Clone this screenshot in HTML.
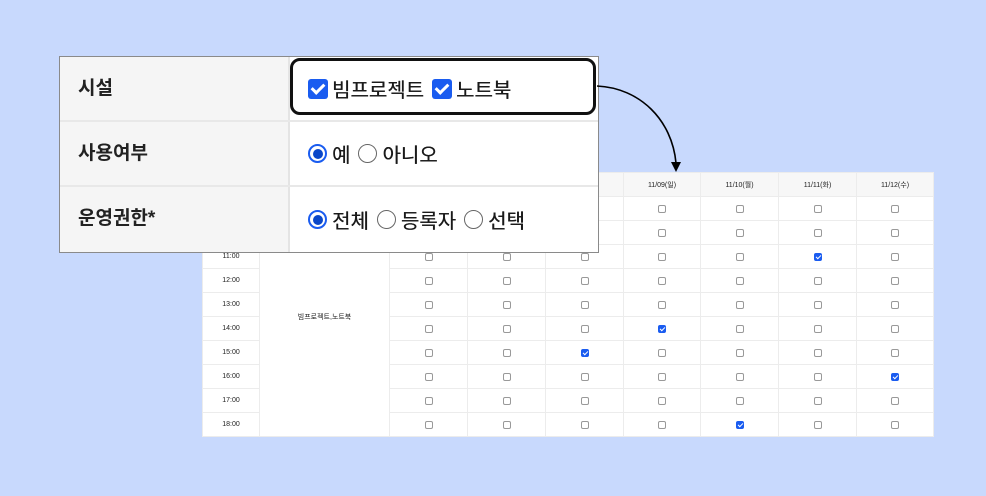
<!DOCTYPE html>
<html><head><meta charset="utf-8">
<style>
*{margin:0;padding:0;box-sizing:border-box}
body{width:986px;height:496px;background:#c8d9fd;position:relative;overflow:hidden;font-family:"Liberation Sans","Noto Sans CJK KR",sans-serif}
#tbl{position:absolute;left:202px;top:172px;width:731px;height:263px;background:#fff;border-collapse:collapse;table-layout:fixed}
#tbl td{border:1px solid #ececec;height:24px;text-align:center;font-size:7px;color:#222;padding:0}
#tbl tr.h td{background:#f7f7f7;font-size:7px;height:24px}
.cb{display:inline-block;width:8px;height:8px;border:1px solid #999;border-radius:2px;vertical-align:middle}
.cb.on{background:#1a5cf0;border-color:#1a5cf0;position:relative}
.cb.on:after{content:"";position:absolute;left:2px;top:0px;width:2px;height:4px;border:solid #fff;border-width:0 1px 1px 0;transform:rotate(45deg)}
#ov{position:absolute;left:59px;top:56px;width:540px;height:197px;background:#fff;border:1px solid #8a8a8a}
.row{position:absolute;left:0;width:538px;height:65px;border-bottom:2px solid #e8e8e8}
.lab{position:absolute;left:0;top:0;width:230px;height:100%;background:#f5f5f5;border-right:2px solid #e4e4e4;font-weight:bold;font-size:19px;color:#222;padding-left:18px;line-height:63px}
.val{position:absolute;left:248px;top:0;height:100%;display:flex;align-items:center;font-size:20px;color:#1a1a1a;text-shadow:0.3px 0 0 #1a1a1a}
.val span{margin-right:8px}
.bc{display:inline-block;width:20px;height:20px;background:#1a5cf0;border-radius:3px;position:relative;margin-right:4px}
.bc:after{content:"";position:absolute;left:6px;top:2px;width:5px;height:10px;border:solid #fff;border-width:0 3px 3px 0;transform:rotate(45deg)}
.rd{display:inline-block;width:19px;height:19px;border:1.5px solid #666;border-radius:50%;margin-right:5px}
.rd.on{border:2px solid #1a5cf0;position:relative}
.rd.on:after{content:"";position:absolute;left:2.5px;top:2.5px;width:10px;height:10px;border-radius:50%;background:#0a47c9}
#hl{position:absolute;left:290px;top:58px;width:306px;height:57px;border:3px solid #111;border-radius:10px}
</style></head><body>
<table id="tbl">
<colgroup><col style="width:57px"><col style="width:130px"><col style="width:78px"><col style="width:78px"><col style="width:78px"><col style="width:77px"><col style="width:78px"><col style="width:78px"><col style="width:77px"></colgroup>
<tr class="h"><td></td><td></td><td></td><td></td><td></td><td>11/09(일)</td><td>11/10(월)</td><td>11/11(화)</td><td>11/12(수)</td></tr>
<tr><td>09:00</td><td rowspan="10">빔프로젝트,노트북</td><td><i class="cb"></i></td><td><i class="cb"></i></td><td><i class="cb"></i></td><td><i class="cb"></i></td><td><i class="cb"></i></td><td><i class="cb"></i></td><td><i class="cb"></i></td></tr>
<tr><td>10:00</td><td><i class="cb"></i></td><td><i class="cb"></i></td><td><i class="cb"></i></td><td><i class="cb"></i></td><td><i class="cb"></i></td><td><i class="cb"></i></td><td><i class="cb"></i></td></tr>
<tr><td>11:00</td><td><i class="cb"></i></td><td><i class="cb"></i></td><td><i class="cb"></i></td><td><i class="cb"></i></td><td><i class="cb"></i></td><td><i class="cb on"></i></td><td><i class="cb"></i></td></tr>
<tr><td>12:00</td><td><i class="cb"></i></td><td><i class="cb"></i></td><td><i class="cb"></i></td><td><i class="cb"></i></td><td><i class="cb"></i></td><td><i class="cb"></i></td><td><i class="cb"></i></td></tr>
<tr><td>13:00</td><td><i class="cb"></i></td><td><i class="cb"></i></td><td><i class="cb"></i></td><td><i class="cb"></i></td><td><i class="cb"></i></td><td><i class="cb"></i></td><td><i class="cb"></i></td></tr>
<tr><td>14:00</td><td><i class="cb"></i></td><td><i class="cb"></i></td><td><i class="cb"></i></td><td><i class="cb on"></i></td><td><i class="cb"></i></td><td><i class="cb"></i></td><td><i class="cb"></i></td></tr>
<tr><td>15:00</td><td><i class="cb"></i></td><td><i class="cb"></i></td><td><i class="cb on"></i></td><td><i class="cb"></i></td><td><i class="cb"></i></td><td><i class="cb"></i></td><td><i class="cb"></i></td></tr>
<tr><td>16:00</td><td><i class="cb"></i></td><td><i class="cb"></i></td><td><i class="cb"></i></td><td><i class="cb"></i></td><td><i class="cb"></i></td><td><i class="cb"></i></td><td><i class="cb on"></i></td></tr>
<tr><td>17:00</td><td><i class="cb"></i></td><td><i class="cb"></i></td><td><i class="cb"></i></td><td><i class="cb"></i></td><td><i class="cb"></i></td><td><i class="cb"></i></td><td><i class="cb"></i></td></tr>
<tr><td>18:00</td><td><i class="cb"></i></td><td><i class="cb"></i></td><td><i class="cb"></i></td><td><i class="cb"></i></td><td><i class="cb on"></i></td><td><i class="cb"></i></td><td><i class="cb"></i></td></tr>
</table>

<div id="ov">
 <div class="row" style="top:0"><div class="lab">시설</div><div class="val"><i class="bc"></i><span>빔프로젝트</span><i class="bc"></i><span>노트북</span></div></div>
 <div class="row" style="top:65px"><div class="lab">사용여부</div><div class="val"><i class="rd on"></i><span>예</span><i class="rd"></i><span>아니오</span></div></div>
 <div class="row" style="top:130px;border-bottom:none"><div class="lab">운영권한*</div><div class="val"><i class="rd on"></i><span>전체</span><i class="rd"></i><span>등록자</span><i class="rd"></i><span>선택</span></div></div>
</div>
<div id="hl"></div>
<svg style="position:absolute;left:0;top:0" width="986" height="496">
<path d="M597 86 C640 88 672 120 676 163" fill="none" stroke="#000" stroke-width="1.6"/>
<polygon points="671,162 681,162 676,172" fill="#000"/>
</svg>
</body></html>
